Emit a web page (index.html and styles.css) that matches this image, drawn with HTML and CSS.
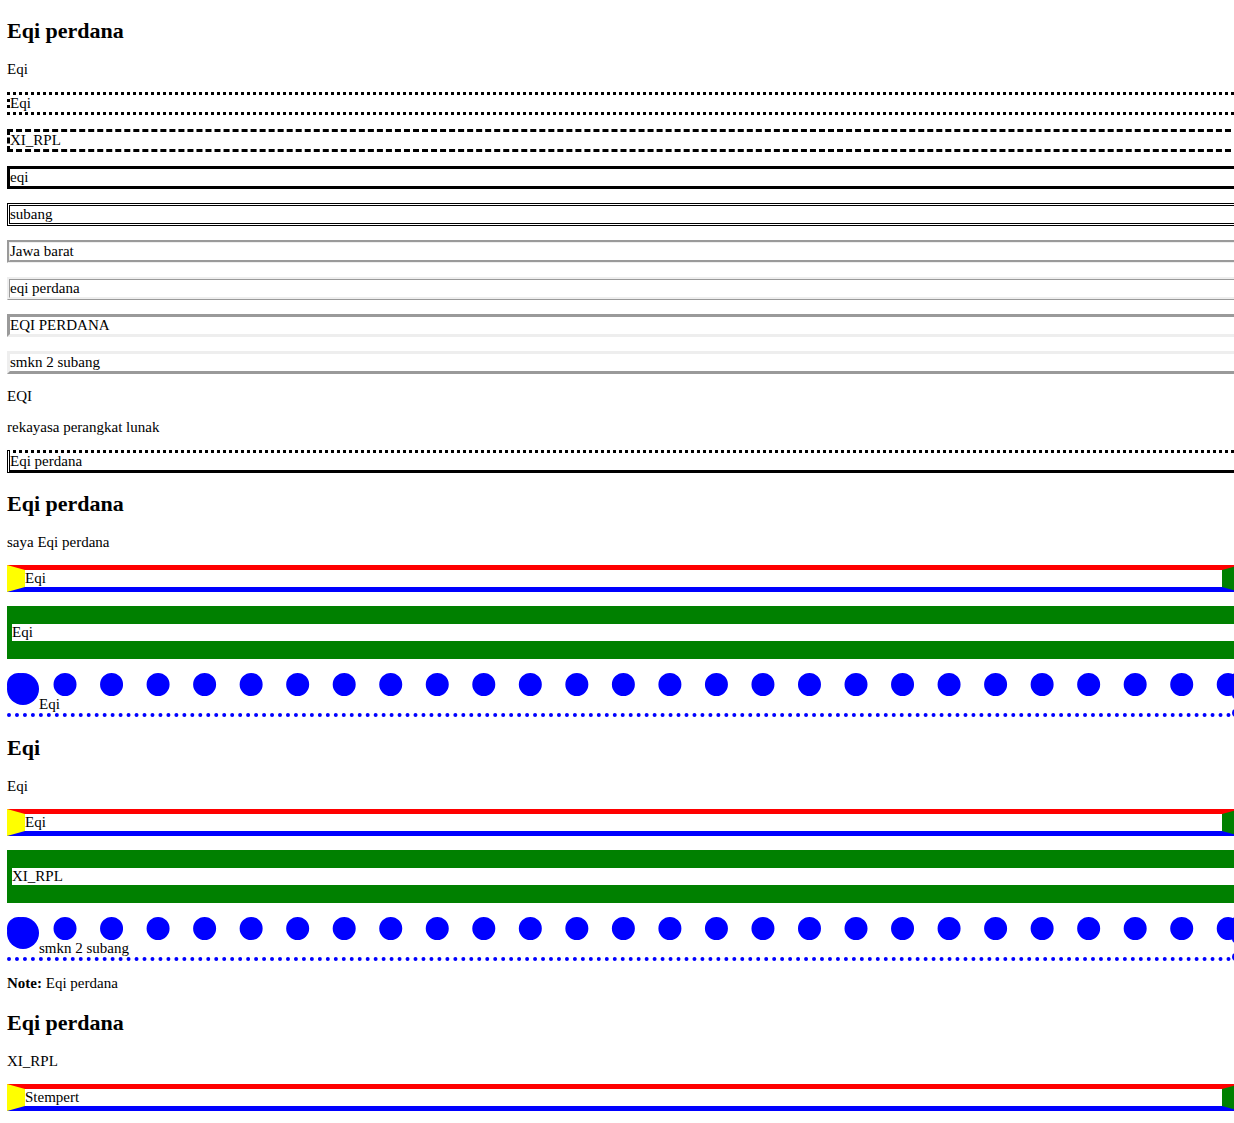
FILE: index.html
```html
<!DOCTYPE html>
<html lang="id">
<head>
<meta charset="utf-8">
<title>Eqi perdana</title>
<link rel="stylesheet" href="styles.css">
</head>
<body>
<main class="page">
<h2>Eqi perdana</h2>
<p>Eqi</p>
<p class="dotted">Eqi</p>
<p class="dashed">XI_RPL</p>
<p class="solid">eqi</p>
<p class="double">subang</p>
<p class="groove">Jawa barat</p>
<p class="ridge">eqi perdana</p>
<p class="inset">EQI PERDANA</p>
<p class="outset">smkn 2 subang</p>
<p>EQI</p>
<p>rekayasa perangkat lunak</p>
<p class="mix">Eqi perdana</p>

<h2>Eqi perdana</h2>
<p>saya Eqi perdana</p>
<p class="ribbon">Eqi</p>
<p class="band">Eqi</p>
<p class="dots">Eqi</p>

<h2>Eqi</h2>
<p>Eqi</p>
<p class="ribbon">Eqi</p>
<p class="band">XI_RPL</p>
<p class="dots">smkn 2 subang</p>
<p><b>Note:</b> Eqi perdana</p>

<h2>Eqi perdana</h2>
<p>XI_RPL</p>
<p class="ribbon">Stempert</p>
</main>
</body>
</html>
```

FILE: styles.css
```css
body {
  margin: 0;
  background: #fff;
  color: #000;
  font: 15px/17px "Liberation Serif", "Times New Roman", serif;
  overflow-x: hidden;
}

/* The bordered rows run on past the right edge of the window. */
.page {
  margin: 18px -6px 14px 7px;
}

h2 {
  margin: 18px 0;
  font-size: 22px;
  line-height: 25px;
}

p {
  margin: 14px 0;
}

.dotted { border: 3px dotted #000; }
.dashed { border: 3px dashed #000; }
.solid { border: 3px solid #000; }
.double { border: 3px double #000; }
.groove { border: 3px groove #eee; }
.ridge { border: 3px ridge #eee; }
.inset { border: 3px inset #eee; }
.outset { border: 3px outset #eee; }

.mix {
  border: 3px #000;
  border-style: dotted dashed solid double;
}

.ribbon {
  border-style: solid;
  border-width: 5px 18px;
  border-color: red green blue yellow;
}

.band {
  border: solid green;
  border-width: 18px 5px;
}

.dots {
  border: dotted blue;
  border-width: 23px 8px 4px 32px;
}
```
